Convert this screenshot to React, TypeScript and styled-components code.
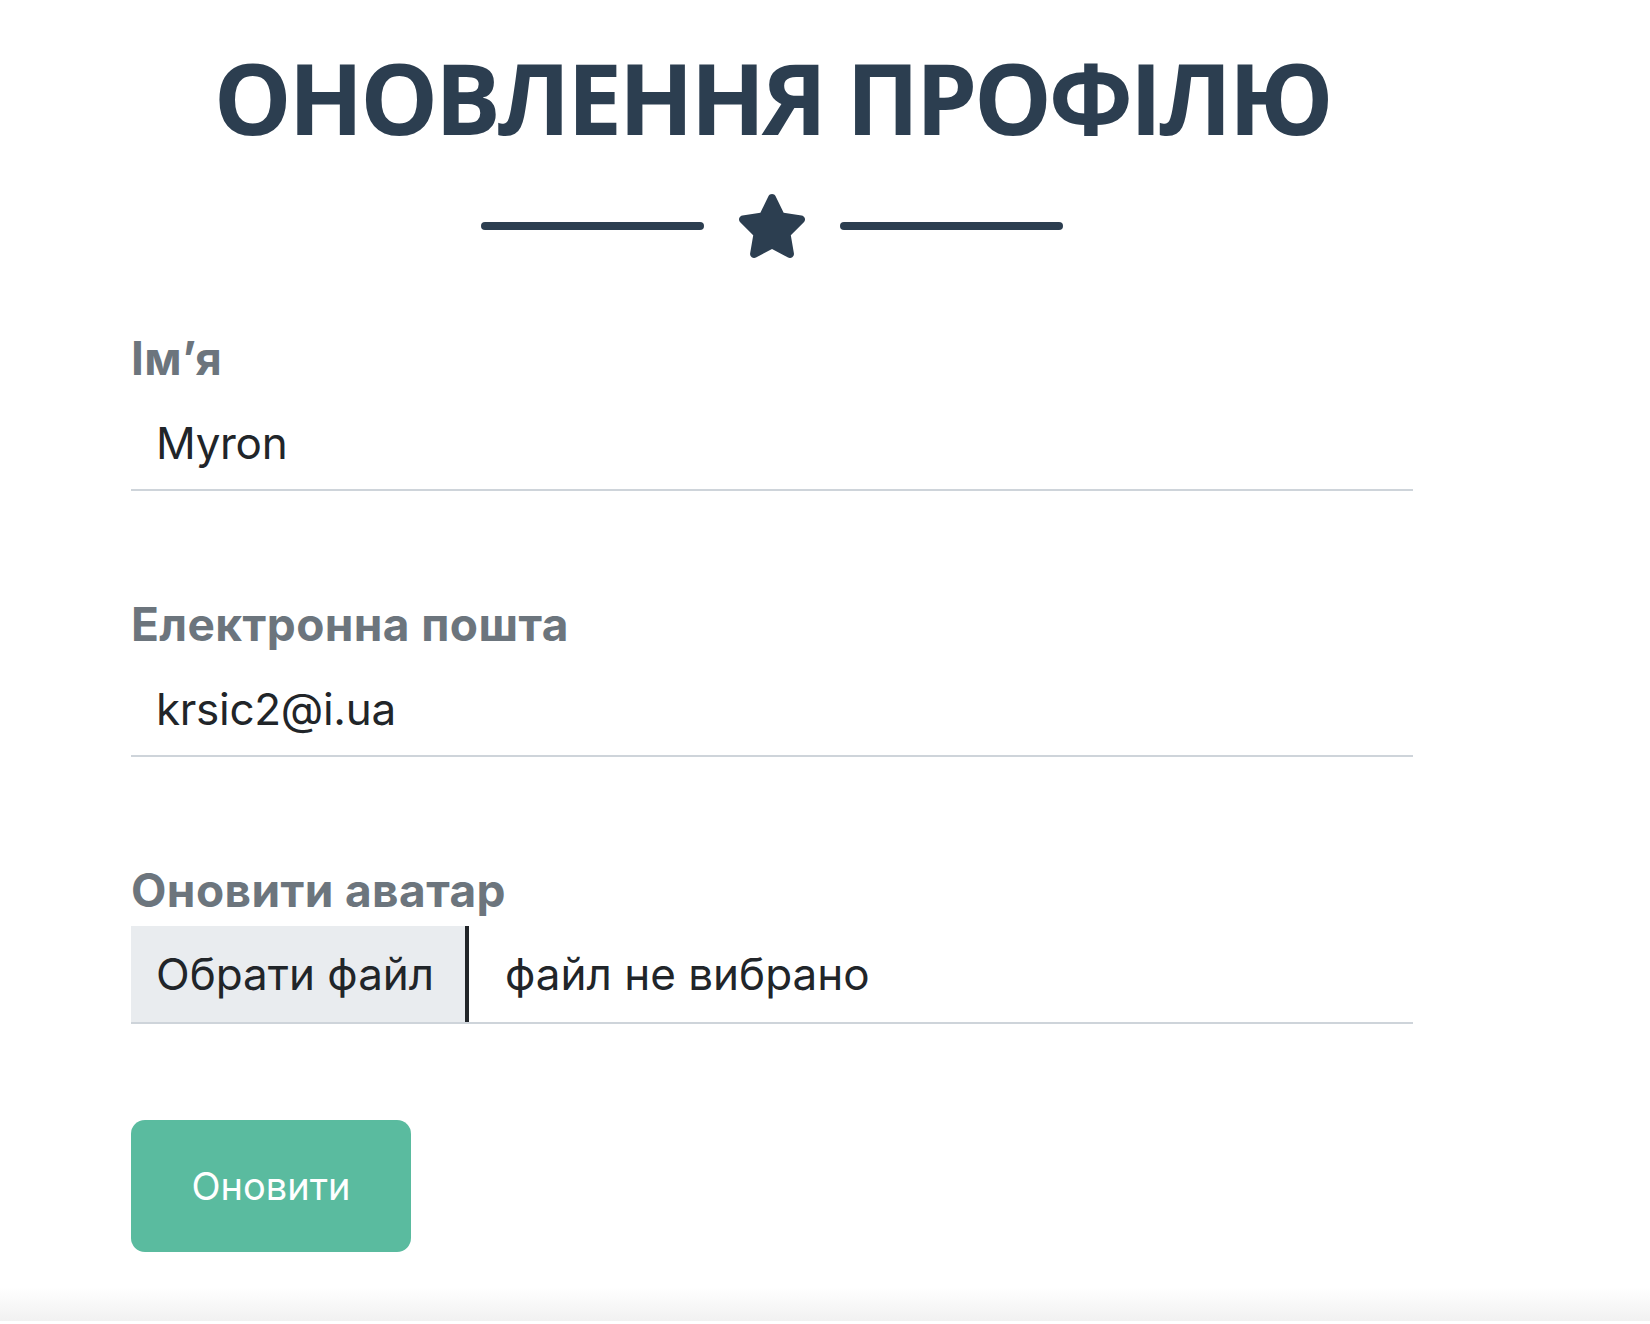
import React from "react";
import styled, { createGlobalStyle } from "styled-components";

const Global = createGlobalStyle`
  html, body { margin: 0; padding: 0; background: #ffffff; }
  body { font-family: Inter, "Liberation Sans", Arial, sans-serif; }
  * { box-sizing: border-box; }
`;

const Page = styled.div`
  width: 1650px;
  min-height: 1324px;
  display: flex;
  flex-direction: column;
`;

const Main = styled.main`
  width: 1282px;
  margin-left: 131px;
  padding-top: 48px;
  display: flex;
  flex-direction: column;
`;

const Header = styled.header`
  display: flex;
  flex-direction: column;
  align-items: center;
`;

const Title = styled.h1`
  margin: 0;
  font-family: "Open Sans", "Liberation Sans", sans-serif;
  font-weight: 700;
  font-size: 98px;
  line-height: 98px;
  color: #2c3e50;
  text-transform: uppercase;
  letter-spacing: -3.3px;
`;

const Divider = styled.div`
  margin-top: 48px;
  height: 64px;
  display: flex;
  align-items: center;
  gap: 32px;
`;

const DividerLine = styled.span`
  display: block;
  width: 223px;
  height: 8px;
  border-radius: 4px;
  background: #2c3e50;
`;

const StarIcon = styled.svg`
  width: 72px;
  height: 64px;
  fill: #2c3e50;
  display: block;
`;

const Form = styled.form`
  margin-top: 74px;
  display: flex;
  flex-direction: column;
`;

const Field = styled.div<{ $last?: boolean }>`
  display: flex;
  flex-direction: column;
  margin-bottom: ${(p) => (p.$last ? "96px" : "107px")};
`;

const Label = styled.label`
  display: block;
  font-family: Inter, "Liberation Sans", sans-serif;
  font-weight: 700;
  font-size: 46px;
  line-height: 53px;
  letter-spacing: 0.4px;
  color: #6c757d;
`;

const TextInput = styled.input`
  margin-top: 11px;
  height: 95px;
  width: 100%;
  border: none;
  border-bottom: 2px solid #ced4da;
  padding: 0 25px;
  font-family: Inter, "Liberation Sans", sans-serif;
  font-size: 44px;
  letter-spacing: -0.3px;
  color: #212529;
  background: transparent;
  outline: none;
`;

const FileRow = styled.div`
  margin-top: 9px;
  height: 98px;
  display: flex;
  align-items: stretch;
  border-bottom: 2px solid #ced4da;
`;

const FileButton = styled.button`
  width: 338px;
  border: none;
  border-right: 4px solid #212529;
  background: #e9ecef;
  padding: 0 0 0 25px;
  text-align: left;
  font-family: Inter, "Liberation Sans", sans-serif;
  font-size: 44px;
  color: #212529;
  cursor: pointer;
`;

const FileName = styled.span`
  display: flex;
  align-items: center;
  padding-left: 36px;
  font-family: Inter, "Liberation Sans", sans-serif;
  font-size: 44px;
  color: #212529;
`;

const Submit = styled.button`
  width: 280px;
  height: 132px;
  border: none;
  border-radius: 14px;
  background: #5abb9f;
  color: #ffffff;
  font-family: Inter, "Liberation Sans", sans-serif;
  font-size: 38px;
  cursor: pointer;
`;

const Footer = styled.div`
  margin-top: 35px;
  height: 34px;
  width: 100%;
  background: linear-gradient(to bottom, #ffffff, #f1f1f1);
`;

export default function App() {
  return (
    <>
      <Global />
      <Page>
        <Main>
          <Header>
            <Title>Оновлення профілю</Title>
            <Divider>
              <DividerLine />
              <StarIcon viewBox="0 0 576 512" aria-hidden="true">
                <path d="M316.9 18C311.6 7 300.4 0 288.1 0s-23.4 7-28.8 18L195 150.3 51.4 171.5c-12 1.8-22 10.2-25.7 21.7s-.7 24.2 7.9 32.7L137.8 329 113.2 474.7c-2 12 3 24.2 12.9 31.3s23 8 33.8 2.3l128.3-68.5 128.3 68.5c10.8 5.7 23.9 4.9 33.8-2.3s14.9-19.3 12.9-31.3L438.5 329 542.7 225.9c8.6-8.5 11.7-21.2 7.9-32.7s-13.7-19.9-25.7-21.7L381.2 150.3 316.9 18z" />
              </StarIcon>
              <DividerLine />
            </Divider>
          </Header>
          <Form onSubmit={(e) => e.preventDefault()}>
            <Field>
              <Label htmlFor="name">Ім’я</Label>
              <TextInput id="name" type="text" defaultValue="Myron" />
            </Field>
            <Field>
              <Label htmlFor="email">Електронна пошта</Label>
              <TextInput id="email" type="email" defaultValue="krsic2@i.ua" />
            </Field>
            <Field $last>
              <Label>Оновити аватар</Label>
              <FileRow>
                <FileButton type="button">Обрати файл</FileButton>
                <FileName>файл не вибрано</FileName>
              </FileRow>
            </Field>
            <div>
              <Submit type="submit">Оновити</Submit>
            </div>
          </Form>
        </Main>
        <Footer />
      </Page>
    </>
  );
}
